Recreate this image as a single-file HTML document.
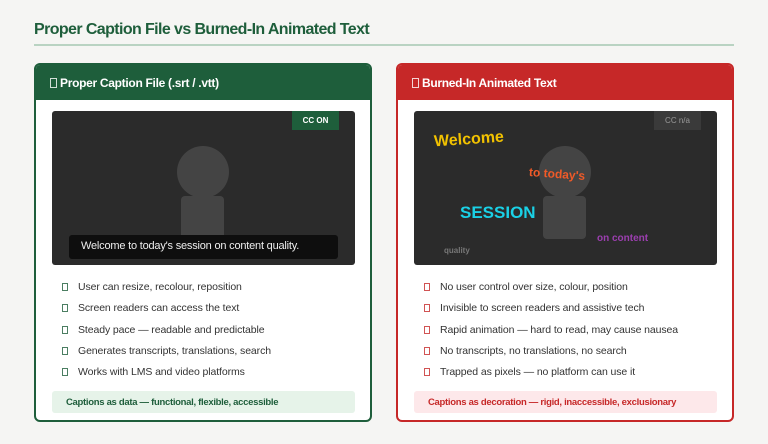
<!DOCTYPE html>
<html><head><style>
*{margin:0;padding:0;box-sizing:border-box}
body{width:768px;height:444px;background:#f5f5f3;font-family:"Liberation Sans",sans-serif;position:relative;overflow:hidden}
.t{position:absolute;left:34px;top:21px;font-size:16px;font-weight:bold;color:#1e5e3b;letter-spacing:-0.6px}
.hr{position:absolute;left:34px;top:44px;width:700px;height:2px;background:#b9d3c2}
.card{position:absolute;top:63px;width:338px;height:359px;background:#fff;border:2px solid;border-radius:6px;overflow:hidden}
.hd{height:35px;color:#fff;font-weight:bold;font-size:12px;padding:11px 0 0 14px;letter-spacing:-0.3px}
.box{display:inline-block;width:7px;height:10px;border:1px solid currentColor;margin-right:3px;vertical-align:-1px;opacity:.8}
.vid{position:absolute;left:16px;top:46px;width:303px;height:154px;background:#2b2b2b;border-radius:3px;overflow:hidden}
.head{position:absolute;left:125px;top:35px;width:52px;height:52px;border-radius:50%;background:#444}
.body{position:absolute;left:129px;top:85px;width:43px;height:43px;border-radius:4px;background:#444}
ul{position:absolute;left:26px;top:216px;list-style:none;font-size:10.5px;color:#333;letter-spacing:-0.1px}
li{height:21.3px}
li .box{width:6px;height:8px;margin-right:10px}
.note{position:absolute;left:16px;top:326px;width:303px;height:22px;border-radius:3px;font-size:9.5px;font-weight:bold;padding:6px 0 0 14px;letter-spacing:-0.3px}
.w{position:absolute;font-weight:bold;white-space:nowrap}
</style></head><body>
<div class="t">Proper Caption File vs Burned-In Animated Text</div>
<div class="hr"></div>

<div class="card" style="left:34px;border-color:#1e5e3b">
<div class="hd" style="background:#1e5e3b"><span class="box"></span>Proper Caption File (.srt / .vtt)</div>
<div class="vid">
<div class="head"></div><div class="body"></div>
<div style="position:absolute;right:16px;top:0;width:47px;height:19px;background:#1e5e3b;color:#fff;font-size:8px;font-weight:bold;text-align:center;line-height:19px">CC ON</div>
<div style="position:absolute;left:17px;top:124px;width:269px;height:24px;background:#0e0e0e;border-radius:3px;color:#eee;font-size:11px;padding:5px 0 0 12px;letter-spacing:-0.2px">Welcome to today's session on content quality.</div>
</div>
<ul>
<li><span class="box" style="color:#1e5e3b"></span>User can resize, recolour, reposition</li>
<li><span class="box" style="color:#1e5e3b"></span>Screen readers can access the text</li>
<li><span class="box" style="color:#1e5e3b"></span>Steady pace — readable and predictable</li>
<li><span class="box" style="color:#1e5e3b"></span>Generates transcripts, translations, search</li>
<li><span class="box" style="color:#1e5e3b"></span>Works with LMS and video platforms</li>
</ul>
<div class="note" style="background:#e6f3e9;color:#1e5e3b">Captions as data — functional, flexible, accessible</div>
</div>

<div class="card" style="left:396px;border-color:#c62828">
<div class="hd" style="background:#c62828"><span class="box"></span>Burned-In Animated Text</div>
<div class="vid">
<div class="head"></div><div class="body"></div>
<div style="position:absolute;right:16px;top:0;width:47px;height:19px;background:#3a3a3a;color:#999;font-size:8px;text-align:center;line-height:19px">CC n/a</div>
<div class="w" style="left:20px;top:20px;font-size:16px;color:#f2c200;transform:rotate(-4deg)">Welcome</div>
<div class="w" style="left:115px;top:56px;font-size:12px;color:#f05a28;transform:rotate(4deg)">to today's</div>
<div class="w" style="left:46px;top:92px;font-size:17px;color:#1ad1e6">SESSION</div>
<div class="w" style="left:183px;top:122px;font-size:10px;color:#9c3fb0">on content</div>
<div class="w" style="left:30px;top:135px;font-size:8px;color:#777">quality</div>
</div>
<ul>
<li><span class="box" style="color:#c62828"></span>No user control over size, colour, position</li>
<li><span class="box" style="color:#c62828"></span>Invisible to screen readers and assistive tech</li>
<li><span class="box" style="color:#c62828"></span>Rapid animation — hard to read, may cause nausea</li>
<li><span class="box" style="color:#c62828"></span>No transcripts, no translations, no search</li>
<li><span class="box" style="color:#c62828"></span>Trapped as pixels — no platform can use it</li>
</ul>
<div class="note" style="background:#fde8ea;color:#c62828">Captions as decoration — rigid, inaccessible, exclusionary</div>
</div>
</body></html>
